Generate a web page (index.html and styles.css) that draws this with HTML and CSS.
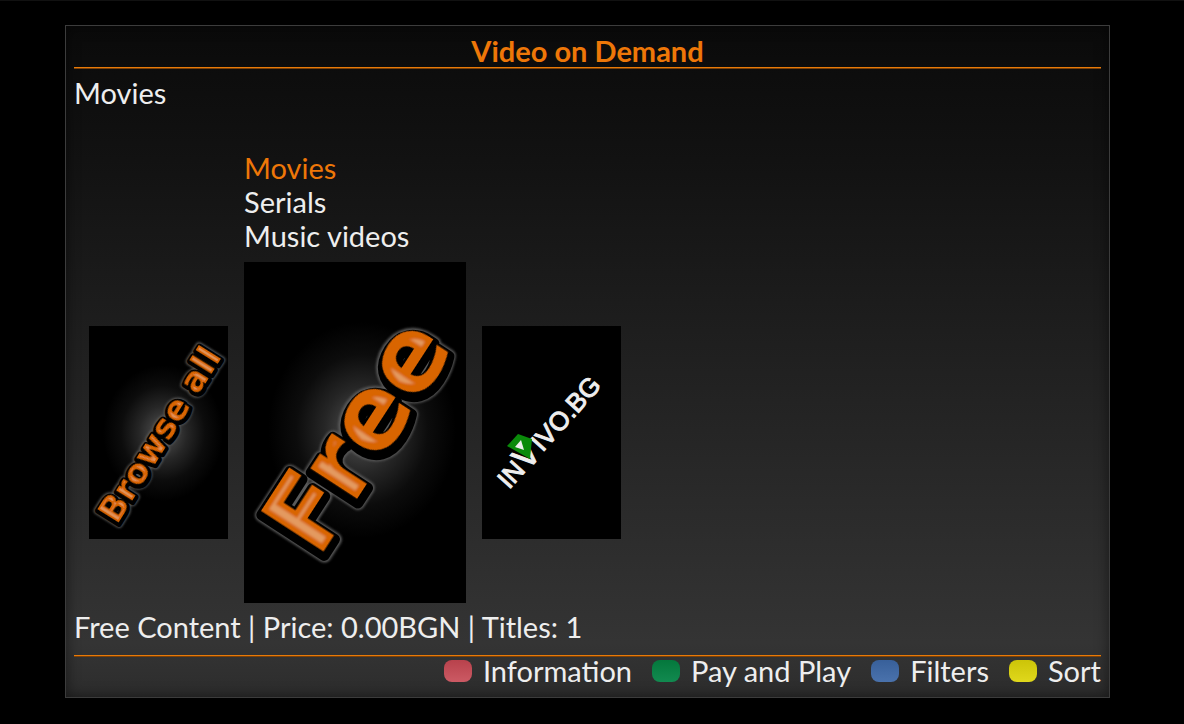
FILE: index.html
```
<!DOCTYPE html>
<html lang="en">
<head>
  <meta charset="utf-8">
  <title>Video on Demand</title>
  <link rel="stylesheet" href="styles.css">
</head>
<body>
  <div class="panel">
    <h1 class="title">Video on Demand</h1>

    <h2 class="category">Movies</h2>

    <nav class="menu">
      <a href="#movies" class="menu-item active">Movies</a>
      <a href="#serials" class="menu-item">Serials</a>
      <a href="#music" class="menu-item">Music videos</a>
    </nav>

    <div class="posters">
      <button class="poster" aria-label="Browse all">
        <svg viewBox="0 0 139 213">
          <defs>
            <radialGradient id="glow">
              <stop offset="0" stop-color="#555"/>
              <stop offset="0.4" stop-color="#262626"/>
              <stop offset="0.7" stop-color="#0c0c0c"/>
              <stop offset="1" stop-color="#000"/>
            </radialGradient>
            <filter id="shineSmall" x="-10%" y="-20%" width="120%" height="140%">
              <feMorphology in="SourceAlpha" operator="erode" radius="2"/>
              <feGaussianBlur stdDeviation="0.5" result="core"/>
              <feFlood flood-color="#e0955a"/>
              <feComposite in2="core" operator="in" result="line"/>
              <feMerge><feMergeNode in="SourceGraphic"/><feMergeNode in="line"/></feMerge>
            </filter>
            <filter id="softSmall" x="-10%" y="-20%" width="120%" height="140%">
              <feGaussianBlur stdDeviation="0.8"/>
            </filter>
          </defs>
          <ellipse cx="74" cy="107" rx="60" ry="68" fill="url(#glow)"/>
          <g class="art art-small" transform="translate(28 199) rotate(-58)">
            <text x="-1" y="1" class="rim" filter="url(#softSmall)">Browse all</text>
            <text x="-1" y="1" class="edge">Browse all</text>
            <text class="face" filter="url(#shineSmall)">Browse all</text>
          </g>
        </svg>
      </button>

      <button class="poster poster-selected" aria-label="Free">
        <svg viewBox="0 0 222 341">
          <defs>
            <filter id="shine" x="-10%" y="-20%" width="120%" height="140%">
              <feMorphology in="SourceAlpha" operator="erode" radius="6"/>
              <feGaussianBlur stdDeviation="1" result="core"/>
              <feFlood flood-color="#e39a60"/>
              <feComposite in2="core" operator="in" result="line"/>
              <feMerge><feMergeNode in="SourceGraphic"/><feMergeNode in="line"/></feMerge>
            </filter>
            <filter id="soft" x="-10%" y="-20%" width="120%" height="140%">
              <feGaussianBlur stdDeviation="1.2"/>
            </filter>
          </defs>
          <ellipse cx="118" cy="168" rx="94" ry="108" fill="url(#glow)"/>
          <g class="art" transform="translate(74 297) rotate(-57)">
            <text x="-3" y="3" class="rim" filter="url(#soft)">Free</text>
            <text x="-3" y="3" class="edge">Free</text>
            <text class="face" filter="url(#shine)">Free</text>
          </g>
        </svg>
      </button>

      <button class="poster" aria-label="INVIVO.BG">
        <svg viewBox="0 0 139 213">
          <g class="invivo" transform="translate(27 164) rotate(-48)">
            <text x="0" y="0">IN</text>
            <text x="26" y="1" class="invivo-v">V</text>
            <text x="50" y="0">IVO.BG</text>
          </g>
          <path d="M36 108 L50 113 L48 133 L25 120 Z" fill="#0a8a0a"/>
          <path d="M33 121 L39 114 L42 124 Z" fill="#eee"/>
        </svg>
      </button>
    </div>

    <p class="details">Free Content | Price: 0.00BGN | Titles: 1</p>

    <div class="legend">
      <button class="key"><span class="swatch red"></span>Information</button>
      <button class="key"><span class="swatch green"></span>Pay and Play</button>
      <button class="key"><span class="swatch blue"></span>Filters</button>
      <button class="key"><span class="swatch yellow"></span>Sort</button>
    </div>
  </div>
</body>
</html>
```
FILE: styles.css
```
* {
  box-sizing: border-box;
}

body {
  display: flex;
  min-height: 100vh;
  margin: 0;
  padding: 24px 74px 26px 65px;
  border-top: 1px solid #111;
  background: #000;
  color: #eee;
  font-family: Lato, Carlito, Calibri, sans-serif;
  font-size: 29px;
  line-height: 34px;
}

.panel {
  flex: 1;
  display: flex;
  flex-direction: column;
  padding: 8px 8px 11px;
  border: 1px solid #3c3c3c;
  background: linear-gradient(#0a0a0a, #121212 20%, #343434 92%, #2c2c2c);
  box-shadow: inset 0 0 14px rgba(0, 0, 0, 0.5);
}

.title {
  margin: 0;
  border-bottom: 1px solid #e87a08;
  box-shadow: 0 1px 0 #7a4008;
  color: #ee7708;
  font-size: 29px;
  font-weight: bold;
  line-height: 33px;
  text-align: center;
}

.category {
  margin: 8px 0 0;
  font-size: 29px;
  font-weight: normal;
}

.menu {
  display: flex;
  flex-direction: column;
  align-items: flex-start;
  margin-top: 41px;
  padding-left: 170px;
}

.menu-item {
  color: #eee;
  text-decoration: none;
}

.menu-item.active {
  color: #ee7708;
}

.posters {
  display: flex;
  align-items: center;
  gap: 16px;
  margin-top: 9px;
  padding-left: 15px;
}

.poster {
  width: 139px;
  padding: 0;
  border: none;
  background: #000;
  cursor: pointer;
}

.poster-selected {
  width: 222px;
}

.poster svg {
  display: block;
  width: 100%;
  overflow: visible;
}

.art {
  font-family: "DejaVu Sans", sans-serif;
  font-size: 102px;
  font-weight: bold;
  stroke-linejoin: round;
}

.art-small {
  font-size: 34px;
}

.rim {
  fill: none;
  stroke: #5a5a5a;
  stroke-width: 14px;
}

.edge {
  fill: #000;
  stroke: #000;
  stroke-width: 11px;
}

.face {
  fill: #d96500;
}

.art-small .rim {
  stroke-width: 8px;
}

.art-small .edge {
  stroke-width: 6px;
}

.invivo {
  fill: #eee;
  stroke: #eee;
  stroke-width: 1px;
  font-family: "Liberation Sans", Arial, sans-serif;
  font-size: 26px;
}

.invivo-v {
  font-size: 34px;
}

.details {
  margin: auto 0 0;
  padding-bottom: 11px;
  border-bottom: 1px solid #e87a08;
  box-shadow: 0 1px 0 #7a4008;
}

.legend {
  display: flex;
  justify-content: flex-end;
  gap: 20px;
  line-height: 30px;
}

.key {
  display: flex;
  align-items: center;
  gap: 11px;
  padding: 0;
  border: none;
  background: none;
  color: inherit;
  font: inherit;
  cursor: pointer;
}

.swatch {
  width: 28px;
  height: 22px;
  border-radius: 8px;
}

.red {
  background: linear-gradient(#b8424c, #cc5a64);
}

.green {
  background: linear-gradient(#04783c, #128a50);
}

.blue {
  background: linear-gradient(#38609a, #4a72ac);
}

.yellow {
  background: linear-gradient(#ccc408, #e0d81c);
}
```
